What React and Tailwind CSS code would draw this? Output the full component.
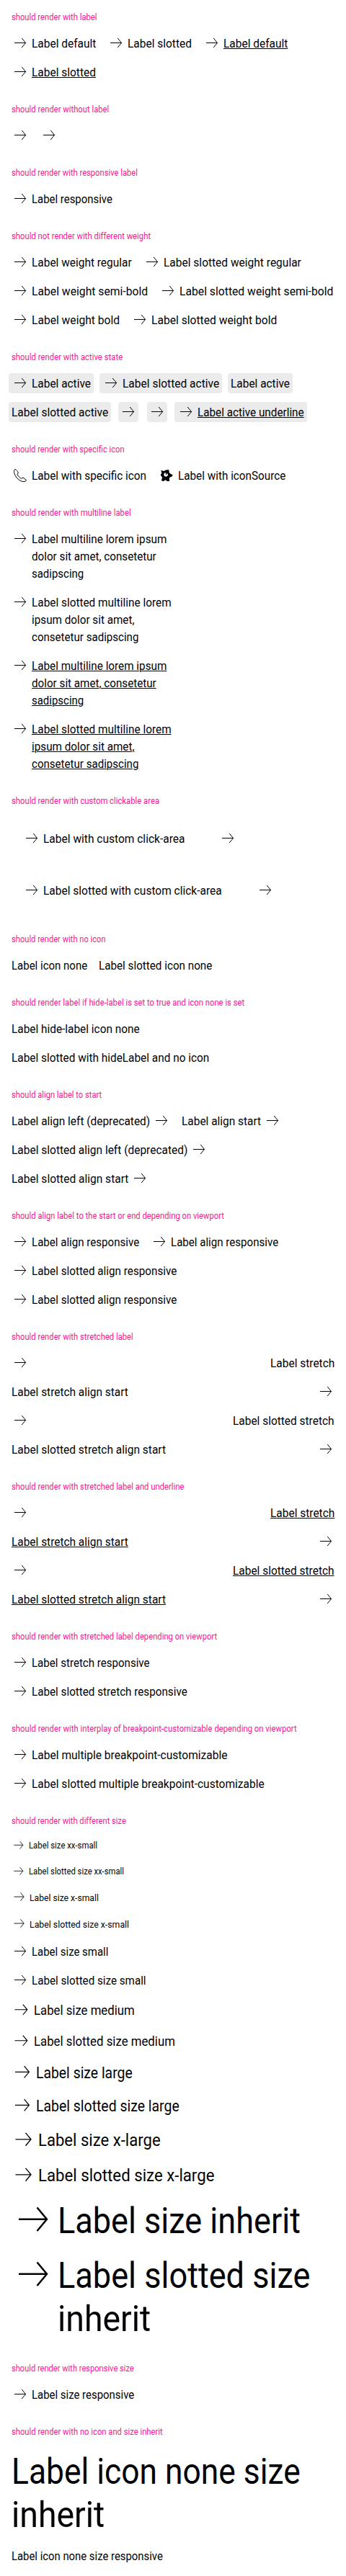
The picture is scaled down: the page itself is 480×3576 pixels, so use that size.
import { useLayoutEffect, useRef, useState } from "react";

// Narrows the letters so that the line takes exactly `w` pixels.
function Line({ w, u, children }) {
  const ref = useRef(null);
  const [ratio, setRatio] = useState(1);
  useLayoutEffect(() => {
    setRatio(w / ref.current.offsetWidth);
  }, []);
  return (
    <span className="block whitespace-nowrap" style={{ width: w }}>
      <span
        ref={ref}
        className={"block w-max origin-left " + (u ? "underline decoration-1 underline-offset-1" : "")}
        style={{ transform: `scaleX(${ratio})` }}
      >
        {children}
      </span>
    </span>
  );
}

function Icon({ name = "arrow", size = "size-6" }) {
  return (
    <svg viewBox="0 0 24 24" className={size + " shrink-0"} fill="none" stroke="currentColor" aria-hidden="true">
      {name === "arrow" && <path d="M4 11.5H19.6M14.2 5L19.6 11.5L14.2 18" />}
      {name === "phone" && (
        <path
          strokeLinejoin="round"
          d="M5 3.4C3.6 4.3 3.3 5.8 3.5 7.6C4 11 6.3 14.6 9.2 17.2C12 19.6 15.2 20.9 18 20.5C19.3 20.3 20.2 19.5 20.6 18.6L16 14.9L13.4 16.4C11.3 15.2 9.2 12.9 8.1 10.6L9.3 8C8.4 6.1 6.8 4.3 5 3.4Z"
        />
      )}
      {name === "star" && (
        <path
          fill="currentColor"
          stroke="none"
          fillRule="evenodd"
          d="M4.3 4.8L8.2 5.9L11.2 4.6L15.2 4L15.9 8.6L18.4 10.2L20.7 11.3L19.6 13.6L16.3 14.7L15.8 17.2L16.2 20H12.9L10.6 18.3L7.6 20L4.9 19.3L6.1 14.6L4.2 12.6L4 10.4L5.4 9ZM9.2 8.4L8.2 10.6L9 12.9L11.2 13.8L13.4 12.8L14.1 10.5L12.6 9.1L11.6 11.2L10.6 10.4L11.3 8.2Z"
        />
      )}
    </svg>
  );
}

// `t` is a list of [text, width] lines.
function Link({ t, u, icon = "arrow", start, stretch, active, pad, size = "size-6", text = "text-base leading-6" }) {
  const label = t && (
    <span className={"-mb-px block pt-px " + text}>
      {t.map(([s, w]) => (
        <Line key={s} w={w} u={u}>
          {s}
        </Line>
      ))}
    </span>
  );
  return (
    <a
      className={
        "items-start gap-1 " +
        (stretch ? "flex w-full justify-between " : "inline-flex ") +
        (pad ? "p-4 " : "") +
        (active ? (t ? "-mx-1 -my-0.5 rounded bg-[#ebebeb] px-1 py-0.5" : "-m-0.5 rounded bg-[#ebebeb] p-0.5") : "")
      }
    >
      {start && label}
      {icon !== "none" && <Icon name={icon} size={size} />}
      {!start && label}
    </a>
  );
}

const Row = ({ children }) => <div className="flex items-start gap-4">{children}</div>;

function Section({ title, w, children }) {
  return (
    <section className="flex flex-col gap-4">
      <h2 className="text-xs leading-4 text-[#ff1493]">
        <Line w={w}>{title}</Line>
      </h2>
      {children}
    </section>
  );
}

export default function App() {
  return (
    <main className="flex h-[3576px] w-[480px] flex-col gap-8 overflow-hidden bg-white p-4 font-['Roboto',sans-serif] text-[#010205]">
      <Section title="should render with label" w={118.5}>
        <Row>
          <Link t={[["Label default", 89]]} />
          <Link t={[["Label slotted", 89]]} />
          <Link u t={[["Label default", 89]]} />
        </Row>
        <Row>
          <Link u t={[["Label slotted", 89]]} />
        </Row>
      </Section>

      <Section title="should render without label" w={135}>
        <Row>
          <Link />
          <Link />
        </Row>
      </Section>

      <Section title="should render with responsive label" w={175}>
        <Row>
          <Link t={[["Label responsive", 112]]} />
        </Row>
      </Section>

      <Section title="should not render with different weight" w={193.5}>
        <Row>
          <Link t={[["Label weight regular", 139]]} />
          <Link t={[["Label slotted weight regular", 191]]} />
        </Row>
        <Row>
          <Link t={[["Label weight semi-bold", 161]]} />
          <Link t={[["Label slotted weight semi-bold", 213]]} />
        </Row>
        <Row>
          <Link t={[["Label weight bold", 122]]} />
          <Link t={[["Label slotted weight bold", 174]]} />
        </Row>
      </Section>

      <Section title="should render with active state" w={154}>
        <Row>
          <Link active t={[["Label active", 82]]} />
          <Link active t={[["Label slotted active", 134]]} />
          <Link active icon="none" t={[["Label active", 82]]} />
        </Row>
        <Row>
          <Link active icon="none" t={[["Label slotted active", 134]]} />
          <Link active />
          <Link active />
          <Link active u t={[["Label active underline", 148]]} />
        </Row>
      </Section>

      <Section title="should render with specific icon" w={157}>
        <Row>
          <Link icon="phone" t={[["Label with specific icon", 159]]} />
          <Link icon="star" t={[["Label with iconSource", 149]]} />
        </Row>
      </Section>

      <Section title="should render with multiline label" w={166}>
        <Link t={[["Label multiline lorem ipsum", 187], ["dolor sit amet, consetetur", 173], ["sadipscing", 72]]} />
        <Link t={[["Label slotted multiline lorem", 194], ["ipsum dolor sit amet,", 142], ["consetetur sadipscing", 148]]} />
        <Link u t={[["Label multiline lorem ipsum", 187], ["dolor sit amet, consetetur", 173], ["sadipscing", 72]]} />
        <Link u t={[["Label slotted multiline lorem", 194], ["ipsum dolor sit amet,", 142], ["consetetur sadipscing", 148]]} />
      </Section>

      <Section title="should render with custom clickable area" w={205}>
        <Row>
          <Link pad t={[["Label with custom click-area", 196]]} />
          <Link pad />
        </Row>
        <Row>
          <Link pad t={[["Label slotted with custom click-area", 248]]} />
          <Link pad />
        </Row>
      </Section>

      <Section title="should render with no icon" w={131}>
        <Row>
          <Link icon="none" t={[["Label icon none", 105]]} />
          <Link icon="none" t={[["Label slotted icon none", 157]]} />
        </Row>
      </Section>

      <Section title="should render label if hide-label is set to true and icon none is set" w={323.5}>
        <Link icon="none" t={[["Label hide-label icon none", 178]]} />
        <Link icon="none" t={[["Label slotted with hideLabel and no icon", 274]]} />
      </Section>

      <Section title="should align label to start" w={125.5}>
        <Row>
          <Link start t={[["Label align left (deprecated)", 192]]} />
          <Link start t={[["Label align start", 110]]} />
        </Row>
        <Link start t={[["Label slotted align left (deprecated)", 244]]} />
        <Link start t={[["Label slotted align start", 162]]} />
      </Section>

      <Section title="should align label to the start or end depending on viewport" w={294.5}>
        <Row>
          <Link t={[["Label align responsive", 149]]} />
          <Link t={[["Label align responsive", 149]]} />
        </Row>
        <Link t={[["Label slotted align responsive", 201]]} />
        <Link t={[["Label slotted align responsive", 201]]} />
      </Section>

      <Section title="should render with stretched label" w={168.5}>
        <Link stretch t={[["Label stretch", 89]]} />
        <Link stretch start t={[["Label stretch align start", 162]]} />
        <Link stretch t={[["Label slotted stretch", 141]]} />
        <Link stretch start t={[["Label slotted stretch align start", 214]]} />
      </Section>

      <Section title="should render with stretched label and underline" w={239}>
        <Link u stretch t={[["Label stretch", 89]]} />
        <Link u stretch start t={[["Label stretch align start", 162]]} />
        <Link u stretch t={[["Label slotted stretch", 141]]} />
        <Link u stretch start t={[["Label slotted stretch align start", 214]]} />
      </Section>

      <Section title="should render with stretched label depending on viewport" w={285.5}>
        <Link t={[["Label stretch responsive", 164]]} />
        <Link t={[["Label slotted stretch responsive", 216]]} />
      </Section>

      <Section title="should render with interplay of breakpoint-customizable depending on viewport" w={395.5}>
        <Link t={[["Label multiple breakpoint-customizable", 271]]} />
        <Link t={[["Label slotted multiple breakpoint-customizable", 323]]} />
      </Section>

      <Section title="should render with different size" w={159}>
        <Link size="size-[19.5px]" text="text-xs leading-[19.5px]" t={[["Label size xx-small", 95.5]]} />
        <Link size="size-[19.5px]" text="text-xs leading-[19.5px]" t={[["Label slotted size xx-small", 132.5]]} />
        <Link size="size-[21px]" text="text-[13.3px] leading-[21px]" t={[["Label size x-small", 96]]} />
        <Link size="size-[21px]" text="text-[13.3px] leading-[21px]" t={[["Label slotted size x-small", 138]]} />
        <Link t={[["Label size small", 106.5]]} />
        <Link t={[["Label slotted size small", 158.5]]} />
        <Link size="size-[26.7px]" text="text-[18.4px] leading-[26.7px]" t={[["Label size medium", 139.5]]} />
        <Link size="size-[26.7px]" text="text-[18.4px] leading-[26.7px]" t={[["Label slotted size medium", 195.5]]} />
        <Link size="size-[29.8px]" text="text-[21.2px] leading-[29.8px]" t={[["Label size large", 133.5]]} />
        <Link size="size-[29.8px]" text="text-[21.2px] leading-[29.8px]" t={[["Label slotted size large", 199]]} />
        <Link size="size-[33px]" text="text-2xl leading-[33px]" t={[["Label size x-large", 169.5]]} />
        <Link size="size-[33px]" text="text-2xl leading-[33px]" t={[["Label slotted size x-large", 244.5]]} />
        <Link size="size-[60px]" text="text-[50px] leading-[60px]" t={[["Label size inherit", 337]]} />
        <Link size="size-[60px]" text="text-[50px] leading-[60px]" t={[["Label slotted size", 350], ["inherit", 129]]} />
      </Section>

      <Section title="should render with responsive size" w={170}>
        <Link t={[["Label size responsive", 142]]} />
      </Section>

      <Section title="should render with no icon and size inherit" w={209.5}>
        <Link icon="none" text="text-[50px] leading-[60px]" t={[["Label icon none size", 401], ["inherit", 129]]} />
        <Link icon="none" t={[["Label icon none size responsive", 210]]} />
      </Section>
    </main>
  );
}
